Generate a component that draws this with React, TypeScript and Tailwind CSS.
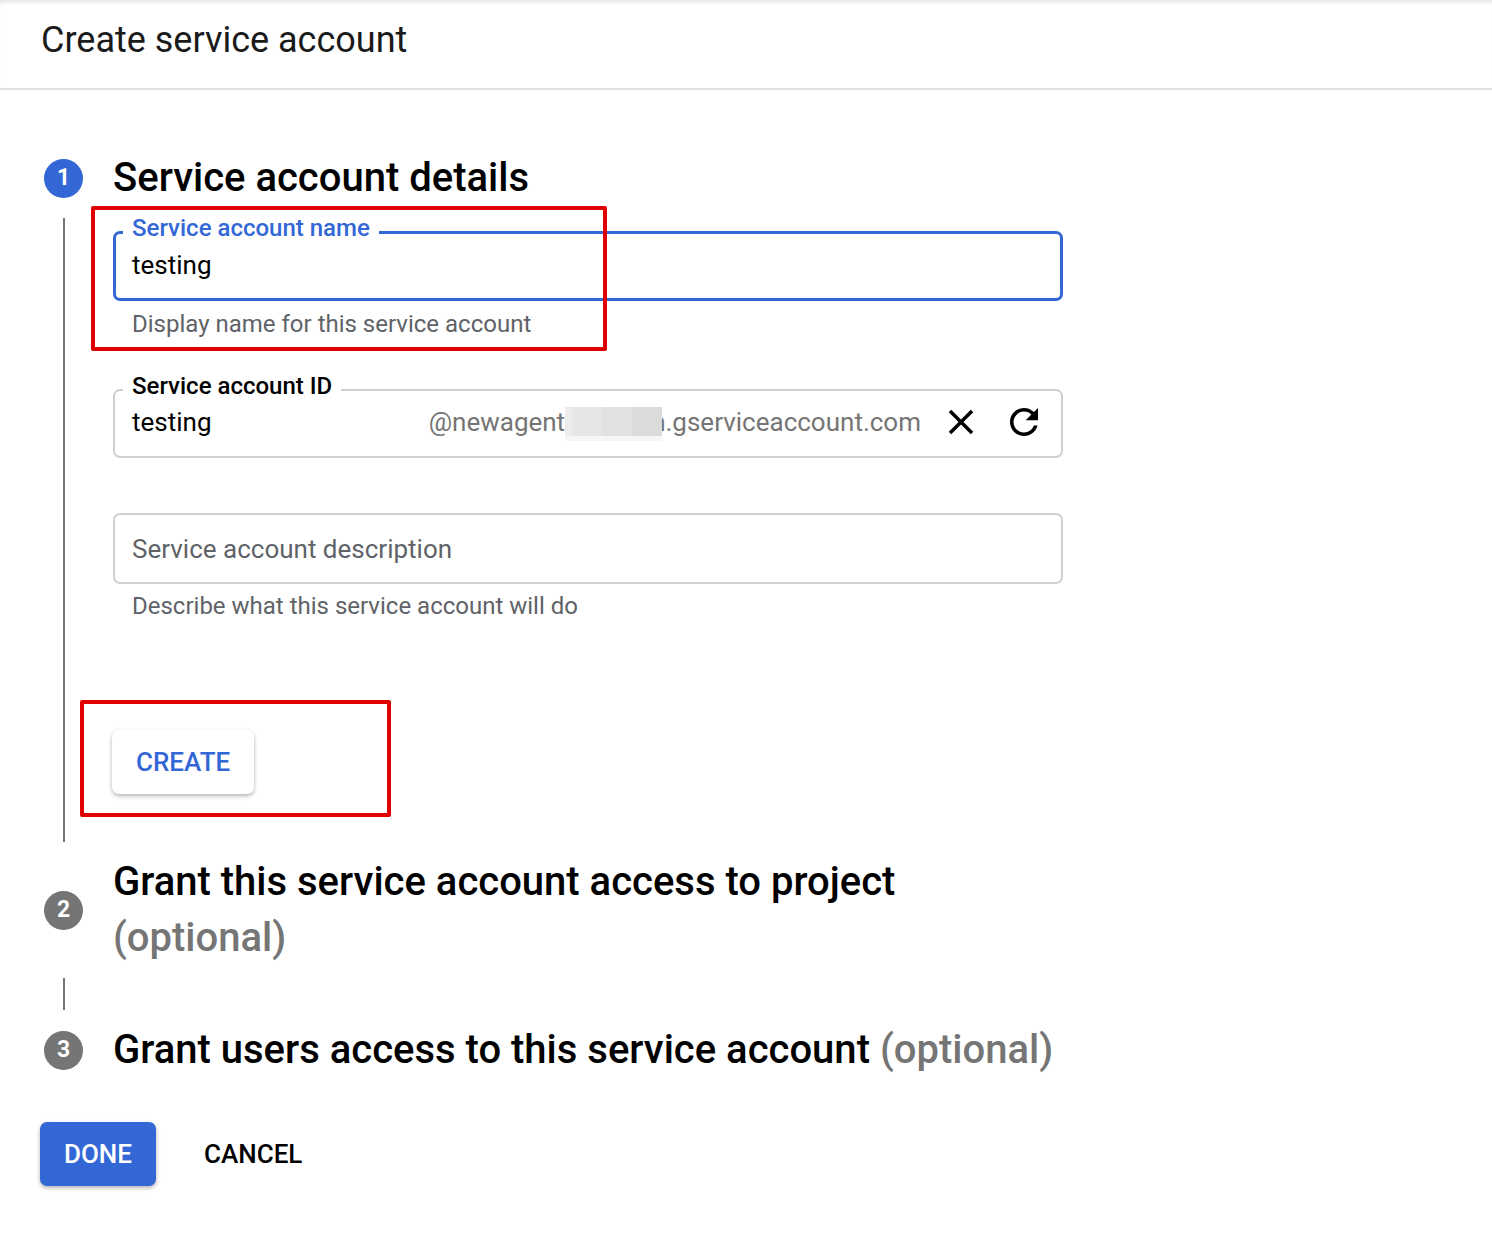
import React from "react";

const BLUE = "#3367d6";

function CloseIcon() {
  return (
    <svg viewBox="0 0 24 24" className="h-[42px] w-[42px]" fill="#000">
      <path d="M19 6.41L17.59 5 12 10.59 6.41 5 5 6.41 10.59 12 5 17.59 6.41 19 12 13.41 17.59 19 19 17.59 13.41 12z" />
    </svg>
  );
}

function RefreshIcon() {
  return (
    <svg viewBox="0 0 24 24" className="h-[42px] w-[42px]" fill="#000">
      <path d="M17.65 6.35C16.2 4.9 14.21 4 12 4c-4.42 0-7.99 3.58-7.99 8s3.57 8 7.99 8c3.73 0 6.84-2.55 7.73-6h-2.08c-.82 2.33-3.04 4-5.65 4-3.31 0-6-2.69-6-6s2.69-6 6-6c1.66 0 3.14.69 4.22 1.78L13 11h7V4l-2.35 2.35z" />
    </svg>
  );
}

function StepCircle({ n, active }: { n: number; active?: boolean }) {
  return (
    <div
      className={`flex h-[39px] w-[39px] shrink-0 items-center justify-center rounded-full text-[23px] font-bold text-white ${
        active ? "bg-[#3367d6]" : "bg-[#757575]"
      }`}
    >
      {n}
    </div>
  );
}

function FloatingLabel({ text, color, focused }: { text: string; color: string; focused?: boolean }) {
  return (
    <span
      className={`absolute bg-white px-[9px] text-[24px] font-medium leading-[30px] ${
        focused ? "left-[7px] top-[-21px]" : "left-[8px] top-[-20px]"
      }`}
      style={{ color }}
    >
      {text}
    </span>
  );
}

export default function App() {
  return (
    <div className="min-h-[1260px] w-full bg-white font-['Roboto',sans-serif] text-black">
      <header className="flex h-[90px] items-start border-b-2 border-[#e0e0e0] px-[41px] pt-[18px] shadow-[inset_0_4px_4px_-2px_rgba(0,0,0,0.12)]">
        <h1 className="text-[36px] font-normal leading-[44px] text-[#1a1a1a]">Create service account</h1>
      </header>

      <main className="pl-[44px]">
        {/* step 1 */}
        <div className="mt-[64px] flex items-center">
          <div className="flex w-[39px] justify-center">
            <StepCircle n={1} active />
          </div>
          <h2 className="ml-[30px] text-[40px] font-medium leading-[48px]">Service account details</h2>
        </div>

        <div className="flex">
          <div className="flex w-[39px] justify-center pt-[16px]">
            <div className="w-[2px] bg-[#757575]" />
          </div>
          <div className="relative ml-[30px] w-[950px] pb-[48px] pt-[29px]">
            {/* annotation boxes */}
            <div className="pointer-events-none absolute left-[-22px] top-[4px] z-10 h-[145px] w-[516px] rounded-[2px] border-4 border-[#e10000]" />
            <div className="pointer-events-none absolute left-[-33px] top-[498px] z-10 h-[117px] w-[311px] rounded-[2px] border-4 border-[#e10000]" />

            {/* name */}
            <div className="relative flex h-[70px] items-center rounded-[7px] border-[3px] border-[#3367d6] px-[16px] pb-[2px]">
              <FloatingLabel text="Service account name" color={BLUE} focused />
              <span className="text-[26px] leading-[32px]">testing</span>
            </div>
            <p className="mt-[9px] pl-[19px] text-[24px] leading-[28px] text-[#5f6368]">Display name for this service account</p>

            {/* id */}
            <div className="relative mt-[51px] flex h-[69px] items-center rounded-[7px] border-2 border-[#cfcfcf] pb-[4px] pl-[17px] pr-[16px]">
              <FloatingLabel text="Service account ID" color="#000" />
              <span className="text-[26px] leading-[32px]">testing</span>
              <div className="ml-auto flex items-center text-[26px] leading-[32px] text-[#757575]">
                <span>@newagent</span>
                <div className="relative z-[1] -mr-[11px] mt-[4px] flex h-[34px] w-[97px] flex-col">
                  <div className="flex h-[29px]">
                    <div className="w-[7px] bg-[#ececec]" />
                    <div className="w-[30px] bg-[#e6e6e6]" />
                    <div className="w-[30px] bg-[#e1e1e1]" />
                    <div className="w-[30px] bg-[#dbdbdb]" />
                  </div>
                  <div className="h-[5px] bg-[#f6f6f6]" />
                </div>
                <span>n.gserviceaccount.com</span>
              </div>
              <div className="ml-[19px] flex items-center gap-[21px]">
                <CloseIcon />
                <RefreshIcon />
              </div>
            </div>

            {/* description */}
            <div className="mt-[55px] flex h-[71px] items-center rounded-[7px] border-2 border-[#cfcfcf] px-[17px]">
              <span className="text-[26px] leading-[32px] text-[#5f6368]">Service account description</span>
            </div>
            <p className="mt-[8px] pl-[19px] text-[24px] leading-[28px] text-[#5f6368]">Describe what this service account will do</p>

            <button className="ml-[-1px] mt-[110px] flex h-[64px] items-center rounded-[7px] bg-white px-[24px] text-[26px] font-medium text-[#3367d6] shadow-[0_2px_4px_rgba(0,0,0,0.3)]">
              CREATE
            </button>
          </div>
        </div>

        {/* step 2 */}
        <div className="mt-[12px] flex items-center">
          <div className="flex w-[39px] justify-center">
            <StepCircle n={2} />
          </div>
          <h2 className="ml-[30px] w-[950px] text-[40px] font-medium leading-[56px]">
            Grant this service account access to project <span className="text-[#757575]">(optional)</span>
          </h2>
        </div>

        <div className="mt-[12px] flex">
          <div className="flex w-[39px] justify-center">
            <div className="h-[32px] w-[2px] bg-[#757575]" />
          </div>
        </div>

        {/* step 3 */}
        <div className="mt-[12px] flex items-center">
          <div className="flex w-[39px] justify-center">
            <StepCircle n={3} />
          </div>
          <h2 className="ml-[30px] w-[1000px] text-[40px] font-medium leading-[56px]">
            Grant users access to this service account <span className="text-[#757575]">(optional)</span>
          </h2>
        </div>
      </main>

      <div className="ml-[40px] mt-[44px] flex items-center">
        <button className="flex h-[64px] w-[116px] items-center justify-center rounded-[7px] bg-[#3367d6] text-[26px] font-medium text-white shadow-[0_2px_4px_rgba(0,0,0,0.3)]">
          DONE
        </button>
        <button className="ml-[24px] flex h-[64px] items-center px-[24px] text-[26px] font-medium text-black">CANCEL</button>
      </div>
    </div>
  );
}
